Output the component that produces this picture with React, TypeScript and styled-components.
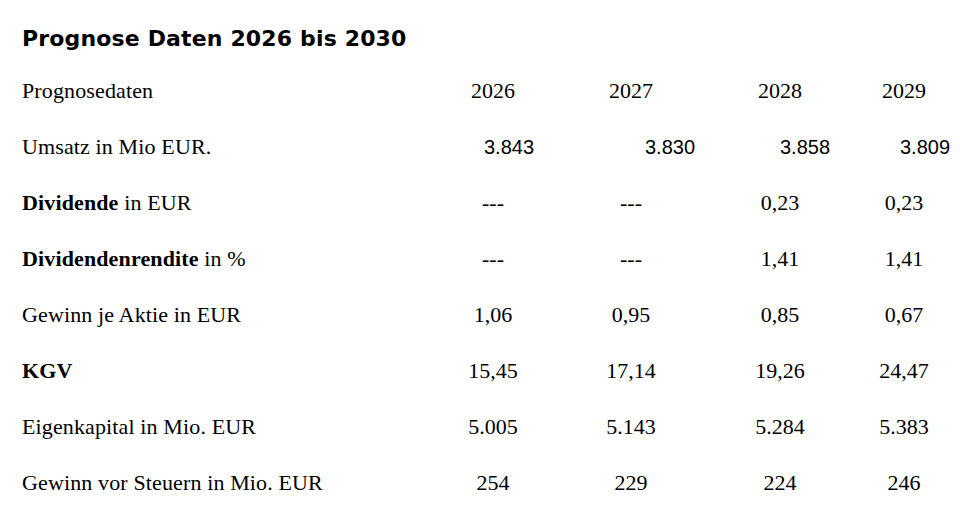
import React from "react";
import styled, { createGlobalStyle } from "styled-components";

const Global = createGlobalStyle`
  html, body { margin: 0; padding: 0; background: #ffffff; }
  body { color: #000000; }
`;

const Page = styled.div`
  width: 960px;
  height: 524px;
  box-sizing: border-box;
  padding: 26px 0 0 22px;
  background: #ffffff;
  overflow: hidden;
`;

const Title = styled.h2`
  margin: 0 0 12px 0;
  font-family: "DejaVu Sans", Verdana, sans-serif;
  font-weight: bold;
  font-size: 22px;
  letter-spacing: 0.15px;
  line-height: normal;
  color: #000;
`;

const Table = styled.div`
  display: grid;
  grid-template-columns: 402px 138px 138px 160px 88px;
  grid-auto-rows: 56px;
  font-family: "Liberation Serif", "Times New Roman", serif;
  font-size: 22px;
  color: #000;
`;

const LabelCell = styled.div`
  display: flex;
  align-items: center;
  white-space: nowrap;
  letter-spacing: 0.13px;
`;

const ValueCell = styled.div<{ $indent?: number; $sans?: boolean }>`
  display: flex;
  align-items: center;
  justify-content: ${(p) => (p.$indent !== undefined ? "flex-start" : "center")};
  padding-left: ${(p) => (p.$indent !== undefined ? `${p.$indent}px` : "0")};
  white-space: nowrap;
  font-family: ${(p) =>
    p.$sans ? `"Liberation Sans", Arial, sans-serif` : "inherit"};
  font-size: ${(p) => (p.$sans ? "20px" : "inherit")};
`;

const Strong = styled.b`
  font-weight: bold;
`;

type Row = {
  label: React.ReactNode;
  values: string[];
  indents?: number[];
  sans?: boolean;
};

const rows: Row[] = [
  { label: "Prognosedaten", values: ["2026", "2027", "2028", "2029"] },
  {
    label: "Umsatz in Mio EUR.",
    values: ["3.843", "3.830", "3.858", "3.809"],
    indents: [60, 83, 80, 40],
    sans: true,
  },
  {
    label: (
      <>
        <Strong>Dividende</Strong> in EUR
      </>
    ),
    values: ["---", "---", "0,23", "0,23"],
  },
  {
    label: (
      <>
        <Strong>Dividendenrendite</Strong> in %
      </>
    ),
    values: ["---", "---", "1,41", "1,41"],
  },
  { label: "Gewinn je Aktie in EUR", values: ["1,06", "0,95", "0,85", "0,67"] },
  {
    label: <Strong>KGV</Strong>,
    values: ["15,45", "17,14", "19,26", "24,47"],
  },
  {
    label: "Eigenkapital in Mio. EUR",
    values: ["5.005", "5.143", "5.284", "5.383"],
  },
  {
    label: "Gewinn vor Steuern in Mio. EUR",
    values: ["254", "229", "224", "246"],
  },
];

export default function App() {
  return (
    <>
      <Global />
      <Page>
        <Title>Prognose Daten 2026 bis 2030</Title>
        <Table>
          {rows.map((row, i) => (
            <React.Fragment key={i}>
              <LabelCell>
                <span>{row.label}</span>
              </LabelCell>
              {row.values.map((v, j) => (
                <ValueCell
                  key={j}
                  $indent={row.indents ? row.indents[j] : undefined}
                  $sans={row.sans}
                >
                  {v}
                </ValueCell>
              ))}
            </React.Fragment>
          ))}
        </Table>
      </Page>
    </>
  );
}
